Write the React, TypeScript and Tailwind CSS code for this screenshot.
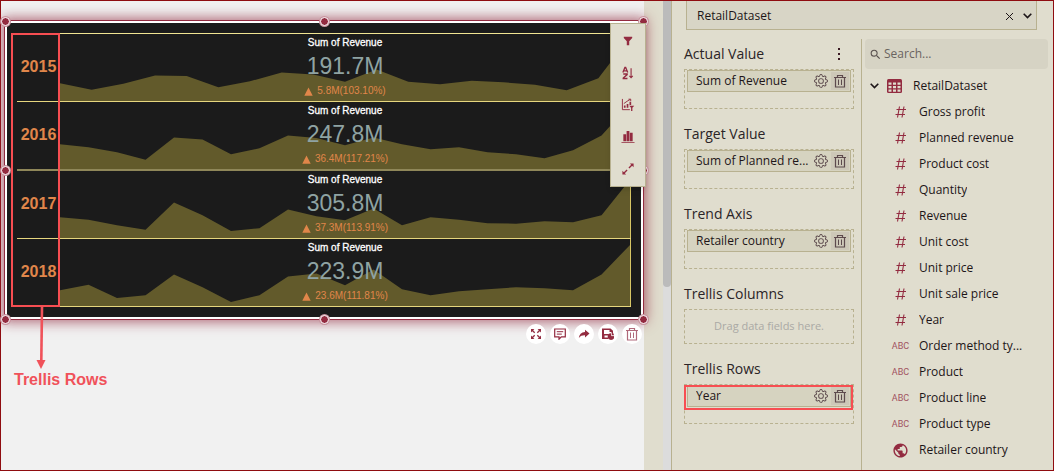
import React from "react";
import { BsGear } from "react-icons/bs";
import { MdPublic, MdSearch } from "react-icons/md";

type Kpi = {
  year: string;
  value: string;
  delta: string;
  trend: number[];
};

/* Trend values are the distance from the top of a 68-unit tall row. */
const kpis: Kpi[] = [
  {
    year: "2015",
    value: "191.7M",
    delta: "5.8M(103.10%)",
    trend: [50, 56.5, 50.5, 42, 42.5, 54, 48, 39, 41, 48.5, 36, 48.5, 51, 47.5, 49, 51.5, 57, 45, 3],
  },
  {
    year: "2016",
    value: "247.8M",
    delta: "36.4M(117.21%)",
    trend: [43, 46, 51, 58.5, 36, 38, 53, 47, 34, 36.5, 44, 36, 43, 48, 46, 51, 53, 57, 49, 34, 2],
  },
  {
    year: "2017",
    value: "305.8M",
    delta: "37.3M(113.91%)",
    trend: [47, 49.5, 55, 59.5, 32, 45, 61, 58, 39, 46, 50, 38, 55, 47, 49.5, 53, 53.5, 51, 52, 45, 9],
  },
  {
    year: "2018",
    value: "223.9M",
    delta: "23.6M(111.81%)",
    trend: [52, 46.5, 60, 57, 36, 49, 64, 57, 38, 35, 47, 31, 51, 57, 53, 51, 49, 50, 52, 36, 6],
  },
];

const measures = [
  "Gross profit",
  "Planned revenue",
  "Product cost",
  "Quantity",
  "Revenue",
  "Unit cost",
  "Unit price",
  "Unit sale price",
  "Year",
];
const dimensions = ["Order method ty...", "Product", "Product line", "Product type"];

function Sparkline({ trend }: { trend: number[] }) {
  const step = 571 / (trend.length - 1);
  const points = trend.map((y, i) => `${(i * step).toFixed(1)},${y}`).join(" ");
  return (
    <svg className="absolute inset-0 h-full w-full" viewBox="0 0 571 68" preserveAspectRatio="none" aria-hidden="true">
      <polygon points={`0,68 ${points} 571,68`} fill="#625a2b" />
    </svg>
  );
}

function KpiRow({ kpi, thick }: { kpi: Kpi; thick: boolean }) {
  return (
    <div
      className={
        thick
          ? "flex h-[69px] border-b-2 border-[#8f8759]"
          : "flex h-[68px] border-b border-[#e6d67e]"
      }
    >
      <div className="flex w-[43px] shrink-0 items-center justify-center pb-0.5 text-base font-bold text-[#e0864a]">
        {kpi.year}
      </div>
      <div className="relative min-w-0 flex-1 border-r border-[#d8c765]">
        <Sparkline trend={kpi.trend} />
        <div className="relative flex flex-col items-center pt-px">
          <div className="text-[10px] leading-4 text-white [-webkit-text-stroke:0.3px_white]">Sum of Revenue</div>
          <div className="mt-[3px] text-[23px] leading-6 text-[#8fa3a3]">{kpi.value}</div>
          <div className="mt-1.5 flex items-center gap-1 text-[10px] leading-[14px] text-[#e0864a]">
            <svg width="9" height="9" viewBox="0 0 9 9" aria-hidden="true">
              <path d="M4.5 0.5 8.7 8.7H0.3Z" fill="currentColor" />
            </svg>
            {kpi.delta}
          </div>
        </div>
      </div>
    </div>
  );
}

function Trash({ size }: { size: number }) {
  return (
    <svg width={size} height={size} viewBox="0 0 14 14" fill="none" stroke="currentColor" aria-hidden="true">
      <path d="M1 3.5h12M4.5 3.5v-2h5v2M2.5 3.5v9.5h9V3.5" strokeWidth="1.2" />
      <path d="M5.5 5.5v5.5M8.5 5.5v5.5" />
    </svg>
  );
}

const toolIcons: { label: string; icon: React.ReactNode }[] = [
  {
    label: "Filter",
    icon: <path d="M3 3h9v1.2L8.8 7.8V12H6.2V7.8L3 4.2Z" fill="currentColor" />,
  },
  {
    label: "Sort",
    icon: (
      <g fill="none" stroke="currentColor" strokeWidth="1.4">
        <path d="M2 7 4.2 1.6h.8L7.2 7M2.8 5.2h3.6M2.4 8.6h4.2v.6L2.4 13v.4h4.5" />
        <path d="M10.8 2.5v10M9 10.6l1.8 2 1.8-2" strokeWidth="1.2" />
      </g>
    ),
  },
  {
    label: "Visual filter",
    icon: (
      <g fill="none" stroke="currentColor">
        <path d="M1.5 1v11.5h8" />
        <path d="M4 10.5V8M7 10.5v-4M10 7.5V4" strokeWidth="1.8" />
        <path d="M3 6 6.5 3.5 10 1.5M8 1.3h2.4v2" />
        <path d="M8.8 8.3h5.4l-2 2.2v3.5h-1.4v-3.5Z" fill="currentColor" stroke="none" />
      </g>
    ),
  },
  {
    label: "Chart type",
    icon: (
      <g fill="currentColor">
        <path d="M2.5 4.5h3V12h-3ZM6 1h3v11H6ZM9.500 3h3v9h-3ZM.5 13h14v1H.5Z" />
      </g>
    ),
  },
  {
    label: "Expand",
    icon: (
      <g fill="none" stroke="currentColor" strokeWidth="1.4">
        <path d="M8.5 6.5 12 3M6.500 8.500 3 12" />
        <path d="M9.500 1.500h4v4ZM1.500 9.500v4h4Z" fill="currentColor" stroke="none" />
      </g>
    ),
  },
];

const actionIcons: { label: string; icon: React.ReactNode }[] = [
  {
    label: "Maximize",
    icon: (
      <g fill="currentColor" stroke="currentColor" strokeWidth="1.3">
        <path d="M1.7 1.7 4.7 4.7M10.3 1.7 7.3 4.7M10.3 10.3 7.3 7.3M1.7 10.3 4.7 7.3" />
        <path d="M1 1h3.400L1 4.400ZM11 1v3.400L7.600 1ZM11 11H7.600L11 7.600ZM1 11V7.600L4.400 11Z" stroke="none" />
      </g>
    ),
  },
  {
    label: "Comment",
    icon: (
      <g fill="none" stroke="currentColor" strokeWidth="1.2">
        <path d="M.7 1h10.600v7.800H7.300L5 11.200V8.800H.7Z" />
        <path d="M2.800 3.700h6.400M2.800 6.100h5" strokeWidth="1" />
      </g>
    ),
  },
  {
    label: "Share",
    icon: (
      <path
        d="M7 1.8 11.5 5.6 7 9.400V7.300C4.300 7.200 2.400 7.900.8 10 1.200 6.500 3.300 4.200 7 3.900Z"
        fill="currentColor"
      />
    ),
  },
  {
    label: "Save widget",
    icon: (
      <g fill="currentColor">
        <path d="M0 .5h8.500L11 2.800V5H9.500V4H2v2h5L6 7.500H2.500V9.500H6V11H0Z" />
        <path d="M2 2h5.500v2H2Z" fill="white" />
        <path d="M9 5.300A3.300 3.300 0 1 1 9 11.900 3.300 3.300 0 0 1 9 5.300Z" />
        <path d="M9.300 5.300v2.800h2.700V5.300Z" fill="white" />
        <path d="M10 4.800a2.500 2.500 0 0 1 2 2.500h-2Z" />
      </g>
    ),
  },
];

function Handle({ at }: { at: string }) {
  return (
    <span
      className={`absolute -mt-1 -ml-1 size-[9px] rounded-full border border-white bg-[#932b40] ring-1 ring-[#c995a0] ${at}`}
    />
  );
}

function Widget() {
  return (
    <section
      aria-label="Revenue by year"
      className="relative mt-[19px] ml-[3px] border border-[#932b40] bg-white p-0.5 shadow-[0_0_12px_2px_rgba(147,43,64,0.7)]"
    >
      <div className="bg-[#1b1b1b] p-2.5">
        <div className="border-t border-[#f0e492]">
          {kpis.map((kpi, i) => (
            <KpiRow key={kpi.year} kpi={kpi} thick={i === 1} />
          ))}
        </div>
      </div>

      <Handle at="left-0 top-0" />
      <Handle at="left-1/2 top-0" />
      <Handle at="left-full top-0" />
      <Handle at="left-0 top-1/2" />
      <Handle at="left-full top-1/2" />
      <Handle at="left-0 top-full" />
      <Handle at="left-1/2 top-full" />
      <Handle at="left-full top-full" />

      <div className="absolute top-0.5 -right-[3px] flex w-9 flex-col items-center border border-[#b8b190] bg-[#e0ddce] py-px text-[#932b40] shadow-md">
        {toolIcons.map((tool) => (
          <button key={tool.label} aria-label={tool.label} className="flex h-8 w-full items-center justify-center">
            <svg width="14" height="14" viewBox="0 0 15 15" aria-hidden="true">
              {tool.icon}
            </svg>
          </button>
        ))}
      </div>

      <div className="absolute top-full right-px mt-[5px] flex gap-1 text-[#932b40]">
        {actionIcons.map((action) => (
          <button
            key={action.label}
            aria-label={action.label}
            className="flex size-5 items-center justify-center rounded-full bg-white"
          >
            <svg width="12" height="12" viewBox="0 0 12 12" aria-hidden="true">
              {action.icon}
            </svg>
          </button>
        ))}
        <button
          aria-label="Delete widget"
          className="flex size-5 items-center justify-center rounded-full bg-white text-[#b0697a]"
        >
          <Trash size={14} />
        </button>
      </div>

      <div className="absolute top-3 left-1.5 h-[274px] w-[49px] border-2 border-[#f74e52]" />
      <div className="absolute top-[286px] left-[9px] text-[#f0525a]">
        <svg className="ml-[21px]" width="12" height="63" viewBox="0 0 12 63" aria-hidden="true">
          <path d="M7 0 6.300 54" stroke="currentColor" strokeWidth="2.600" />
          <path d="M1.500 53h9L6 62Z" fill="currentColor" />
        </svg>
        <p className="text-base leading-5 font-bold whitespace-nowrap">Trellis Rows</p>
      </div>
    </section>
  );
}

function Slot({
  title,
  field,
  menu = false,
  marked = false,
}: {
  title: string;
  field?: string;
  menu?: boolean;
  marked?: boolean;
}) {
  return (
    <section>
      <div className="mb-[5px] flex h-5 items-center justify-between pr-3">
        <h2 className="text-[14px] leading-5 text-[#2b2427]">{title}</h2>
        {menu && (
          <button aria-label={`${title} options`} className="text-[#3a1a24]">
            <svg width="6" height="14" viewBox="0 0 6 14" fill="currentColor" aria-hidden="true">
              <path d="M2 1h2v2H2ZM2 6h2v2H2ZM2 11h2v2H2Z" />
            </svg>
          </button>
        )}
      </div>
      {field ? (
        <div className="relative h-10 border border-dashed border-[#b8b190] px-0.5">
          <div className="flex h-[22px] items-center border border-[#b8b190] bg-[#d6d3c0] pl-2 text-xs text-[#1d1518]">
            <span className="min-w-0 flex-1 truncate">{field}</span>
            <button aria-label={`${field} settings`} className="mr-[3px] text-[#5d4a4d]">
              <BsGear size={14} />
            </button>
            <button
              aria-label={`Remove ${field}`}
              className="mr-px flex size-[18px] items-center justify-center bg-[#cdc8b8] text-[#5d4a4d]"
            >
              <Trash size={14} />
            </button>
          </div>
          {marked && <div className="absolute top-0 -right-0 -left-px h-[25px] border-2 border-[#f74e52]" />}
        </div>
      ) : (
        <div className="flex h-[35px] items-center justify-center border border-dashed border-[#b8b190] text-[11px] text-[#aaa9a5]">
          Drag data fields here.
        </div>
      )}
    </section>
  );
}

function TreeItem({ icon, name }: { icon: React.ReactNode; name: string }) {
  return (
    <li className="flex h-[26px] items-center pl-6 text-[#932b40]">
      <span className="mr-[7px] flex w-[23px] justify-center">{icon}</span>
      <span className="truncate text-[#1d1518]">{name}</span>
    </li>
  );
}

const chevron = (
  <svg width="9" height="6" viewBox="0 0 9 6" fill="none" stroke="currentColor" strokeWidth="1.6" aria-hidden="true">
    <path d="M.7.8 4.5 4.6 8.3.8" />
  </svg>
);

export default function App() {
  return (
    <div className="flex min-h-screen border border-[#8f0c10] bg-[#e0ddce] font-['Open_Sans','Noto_Sans',sans-serif]">
      <main className="relative z-10 min-w-0 flex-1 bg-[#f1f1f1] font-['Liberation_Sans',Arial,sans-serif]">
        <Widget />
      </main>

      <div className="w-[19px] shrink-0" />
      <div className="w-2 shrink-0 bg-[#dcdcdc]">
        <div className="h-[61%] rounded-b bg-[#bbbbbb]" />
      </div>

      <aside className="flex w-[382px] shrink-0 flex-col border-l border-[#b8b190]">
        <div className="mr-4 ml-3.5 flex h-[29px] items-center border border-t-0 border-[#b8b190] bg-[#d8d5c6] pt-0.5 pr-1 pl-2.5 text-xs text-[#1d1518]">
          <span className="flex-1">RetailDataset</span>
          <button aria-label="Clear dataset" className="mr-[9px]">
            <svg width="9" height="9" viewBox="0 0 9 9" stroke="currentColor" aria-hidden="true">
              <path d="M1 1 8 8M8 1 1 8" />
            </svg>
          </button>
          <button aria-label="Choose dataset">{chevron}</button>
        </div>

        <div className="mt-[9px] flex flex-1">
          <div className="flex w-[190px] flex-col gap-[15px] border-r border-[#b8b190] pt-[5px] pr-[7px] pl-3">
            <Slot title="Actual Value" field="Sum of Revenue" menu />
            <Slot title="Target Value" field="Sum of Planned re..." />
            <Slot title="Trend Axis" field="Retailer country" />
            <Slot title="Trellis Columns" />
            <Slot title="Trellis Rows" field="Year" marked />
          </div>

          <div className="min-w-0 flex-1 pr-[5px] pl-[3px] text-xs">
            <label className="flex h-[30px] items-center rounded-sm bg-[#d6d3c4] pl-1 text-[#5a5250]">
              <MdSearch size={13} />
              <input
                type="text"
                aria-label="Search fields"
                placeholder="Search..."
                className="ml-0.5 min-w-0 flex-1 bg-transparent text-xs outline-none placeholder:text-[#6a6461]"
              />
            </label>
            <div className="mt-1 flex h-[26px] items-center pl-[5px] text-[#1d1518]">
              <button aria-label="Collapse RetailDataset">{chevron}</button>
              <svg className="mr-[11px] ml-2" width="15" height="14" viewBox="0 0 15 14" aria-hidden="true">
                <rect width="15" height="14" rx="1.5" fill="#932b40" />
                <path
                  d="M1.5 3.5h3v2.3h-3ZM6 3.5h3v2.3H6ZM10.5 3.5h3v2.3h-3ZM1.5 7h3v2.3h-3ZM6 7h3v2.3H6ZM10.5 7h3v2.3h-3ZM1.5 10.5h3v2.3h-3ZM6 10.5h3v2.3H6ZM10.5 10.5h3v2.3h-3Z"
                  fill="#e0ddce"
                />
              </svg>
              <span>RetailDataset</span>
            </div>
            <ul>
              {measures.map((name) => (
                <TreeItem
                  key={name}
                  name={name}
                  icon={
                    <svg width="12" height="12" viewBox="0 0 12 12" fill="none" stroke="currentColor" aria-hidden="true">
                      <path d="M4.5.5 2.5 11.5M9 .5 7 11.5M1.500 3.500h9.500M.5 8.500h9.500" strokeWidth="1.1" />
                    </svg>
                  }
                />
              ))}
              {dimensions.map((name) => (
                <TreeItem
                  key={name}
                  name={name}
                  icon={<span className="font-['Roboto',sans-serif] text-[9px] text-[#a05260]">ABC</span>}
                />
              ))}
              <TreeItem name="Retailer country" icon={<MdPublic size={17} />} />
            </ul>
          </div>
        </div>
      </aside>
    </div>
  );
}
